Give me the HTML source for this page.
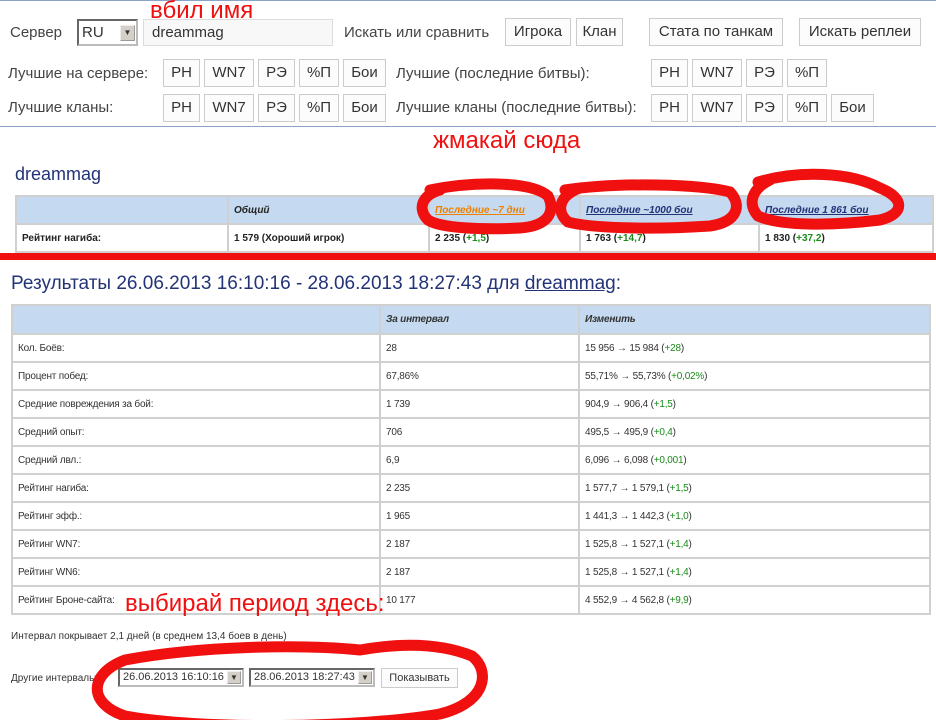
<!DOCTYPE html><html><head><meta charset="utf-8"><style>
*{margin:0;padding:0;box-sizing:border-box}
body{width:936px;height:720px;background:#fff;position:relative;overflow:hidden;font-family:"Liberation Sans","DejaVu Sans",sans-serif;color:#333}
.a{position:absolute;white-space:nowrap}
.t{font-size:15px;color:#444}
.b{position:absolute;border:1px solid #ccc;background:#fcfcfc;font-size:15px;color:#333;text-align:center;height:28px;line-height:26px}
table{border-collapse:collapse;position:absolute}
td{border:2px solid #d0d0d0;padding:0 5px;vertical-align:middle}
.top td{font-size:10px;font-weight:bold;color:#222;height:28px}
.top tr:first-child td{background:#c5daf0;font-style:italic}
.m td{font-size:10px;color:#333;height:28px;letter-spacing:-.2px}
.m tr:first-child td{background:#c5daf0;font-style:italic;font-weight:bold;height:29px}
.g{color:#1a8a1a}
a{color:#223377;text-decoration:underline}
.sel{position:absolute;border:2px inset #bbb;background:#fff;font-size:11px;height:19px;line-height:15px;padding-left:3px}
.sel i{position:absolute;right:1px;top:1px;width:14px;height:13px;background:#d4d0c8;border:1px outset #eee;font-style:normal;font-size:8px;text-align:center;line-height:12px}
</style></head><body>
<div class="a" style="left:0;top:0;width:936px;height:1px;background:#8aa4c8"></div>
<div class="a t" style="left:10px;top:24px">Сервер</div>
<div class="sel" style="left:77px;top:19px;width:61px;height:27px;font-size:15px;line-height:23px">RU<i style="top:4px;width:15px;height:16px;line-height:14px">▼</i></div>
<div class="a" style="left:143px;top:19px;width:190px;height:27px;border:1px solid #ddd;background:#f8f8f8;font-size:15px;line-height:25px;padding-left:8px;color:#333">dreammag</div>
<div class="a" style="left:150px;top:-3px;font-size:24px;color:#f01010">вбил имя</div>
<div class="a t" style="left:344px;top:24px">Искать или сравнить</div>
<div class="b" style="left:505px;top:18px;width:66px">Игрока</div>
<div class="b" style="left:576px;top:18px;width:47px">Клан</div>
<div class="b" style="left:649px;top:18px;width:134px">Стата по танкам</div>
<div class="b" style="left:799px;top:18px;width:122px">Искать реплеи</div>
<div class="a t" style="left:8px;top:65px">Лучшие на сервере:</div>
<div class="b" style="left:163px;top:59px;width:37px">РН</div>
<div class="b" style="left:204px;top:59px;width:50px">WN7</div>
<div class="b" style="left:258px;top:59px;width:37px">РЭ</div>
<div class="b" style="left:299px;top:59px;width:40px">%П</div>
<div class="b" style="left:343px;top:59px;width:43px">Бои</div>
<div class="a t" style="left:396px;top:65px">Лучшие (последние битвы):</div>
<div class="b" style="left:651px;top:59px;width:37px">РН</div>
<div class="b" style="left:692px;top:59px;width:50px">WN7</div>
<div class="b" style="left:746px;top:59px;width:37px">РЭ</div>
<div class="b" style="left:787px;top:59px;width:40px">%П</div>
<div class="a t" style="left:8px;top:99px">Лучшие кланы:</div>
<div class="b" style="left:163px;top:94px;width:37px">РН</div>
<div class="b" style="left:204px;top:94px;width:50px">WN7</div>
<div class="b" style="left:258px;top:94px;width:37px">РЭ</div>
<div class="b" style="left:299px;top:94px;width:40px">%П</div>
<div class="b" style="left:343px;top:94px;width:43px">Бои</div>
<div class="a t" style="left:396px;top:99px">Лучшие кланы (последние битвы):</div>
<div class="b" style="left:651px;top:94px;width:37px">РН</div>
<div class="b" style="left:692px;top:94px;width:50px">WN7</div>
<div class="b" style="left:746px;top:94px;width:37px">РЭ</div>
<div class="b" style="left:787px;top:94px;width:40px">%П</div>
<div class="b" style="left:831px;top:94px;width:43px">Бои</div>
<div class="a" style="left:0;top:126px;width:936px;height:1px;background:#8aa4c8"></div>
<div class="a" style="left:433px;top:127px;font-size:24px;color:#f01010">жмакай сюда</div>
<div class="a" style="left:15px;top:164px;font-size:18px;color:#223377">dreammag</div>
<table class="top" style="left:15px;top:195px;width:919px">
<tr><td style="width:212px"></td><td style="width:201px">Общий</td><td style="width:151px"><a style="color:#f08000">Последние ~7 дни</a></td><td style="width:179px"><a>Последние ~1000 бои</a></td><td><a>Последние 1 861 бои</a></td></tr>
<tr><td>Рейтинг нагиба:</td><td>1 579 (Хороший игрок)</td><td>2 235 (<span class="g">+1,5</span>)</td><td>1 763 (<span class="g">+14,7</span>)</td><td>1 830 (<span class="g">+37,2</span>)</td></tr>
</table>
<div class="a" style="left:0;top:253px;width:936px;height:7px;background:#f01010"></div>
<div class="a" style="left:11px;top:273px;font-size:19px;color:#223377">Результаты 26.06.2013 16:10:16 - 28.06.2013 18:27:43 для <a>dreammag</a>:</div>
<table class="m" style="left:11px;top:304px;width:920px">
<tr><td style="width:368px"></td><td style="width:199px">За интервал</td><td>Изменить</td></tr>
<tr><td>Кол. Боёв:</td><td>28</td><td>15 956 → 15 984 (<span class="g">+28</span>)</td></tr>
<tr><td>Процент побед:</td><td>67,86%</td><td>55,71% → 55,73% (<span class="g">+0,02%</span>)</td></tr>
<tr><td>Средние повреждения за бой:</td><td>1 739</td><td>904,9 → 906,4 (<span class="g">+1,5</span>)</td></tr>
<tr><td>Средний опыт:</td><td>706</td><td>495,5 → 495,9 (<span class="g">+0,4</span>)</td></tr>
<tr><td>Средний лвл.:</td><td>6,9</td><td>6,096 → 6,098 (<span class="g">+0,001</span>)</td></tr>
<tr><td>Рейтинг нагиба:</td><td>2 235</td><td>1 577,7 → 1 579,1 (<span class="g">+1,5</span>)</td></tr>
<tr><td>Рейтинг эфф.:</td><td>1 965</td><td>1 441,3 → 1 442,3 (<span class="g">+1,0</span>)</td></tr>
<tr><td>Рейтинг WN7:</td><td>2 187</td><td>1 525,8 → 1 527,1 (<span class="g">+1,4</span>)</td></tr>
<tr><td>Рейтинг WN6:</td><td>2 187</td><td>1 525,8 → 1 527,1 (<span class="g">+1,4</span>)</td></tr>
<tr><td>Рейтинг Броне-сайта:</td><td>10 177</td><td>4 552,9 → 4 562,8 (<span class="g">+9,9</span>)</td></tr>
</table>
<div class="a" style="left:125px;top:590px;font-size:24px;color:#f01010">выбирай период здесь:</div>
<div class="a" style="left:11px;top:631px;font-size:10px">Интервал покрывает 2,1 дней (в среднем 13,4 боев в день)</div>
<div class="a" style="left:11px;top:673px;font-size:10px">Другие интервалы:</div>
<div class="sel" style="left:118px;top:668px;width:126px">26.06.2013 16:10:16<i>▼</i></div>
<div class="sel" style="left:249px;top:668px;width:126px">28.06.2013 18:27:43<i>▼</i></div>
<div class="b" style="left:381px;top:668px;width:77px;height:20px;line-height:18px;font-size:11px">Показывать</div>
<svg class="a" style="left:0;top:0" width="936" height="720" fill="none" stroke="#f01010" stroke-width="11" stroke-linecap="round">
<path d="M430 190 C470 182 530 180 548 196 C556 212 548 226 520 228 C480 230 440 228 428 220 C418 210 420 196 440 190"/>
<path d="M565 190 C620 182 700 184 730 192 C742 205 738 222 710 226 C650 230 590 228 568 222 C556 212 558 196 580 188"/>
<path d="M758 182 C800 170 850 172 880 188 C905 198 905 214 880 220 C830 226 780 226 758 216 C748 205 750 190 770 180"/>
<path d="M360 650 C300 644 200 646 125 660 C88 674 88 704 125 716 C200 730 360 728 440 714 C488 702 490 670 472 656 C440 643 400 643 360 650"/>
</svg>
</body></html>
